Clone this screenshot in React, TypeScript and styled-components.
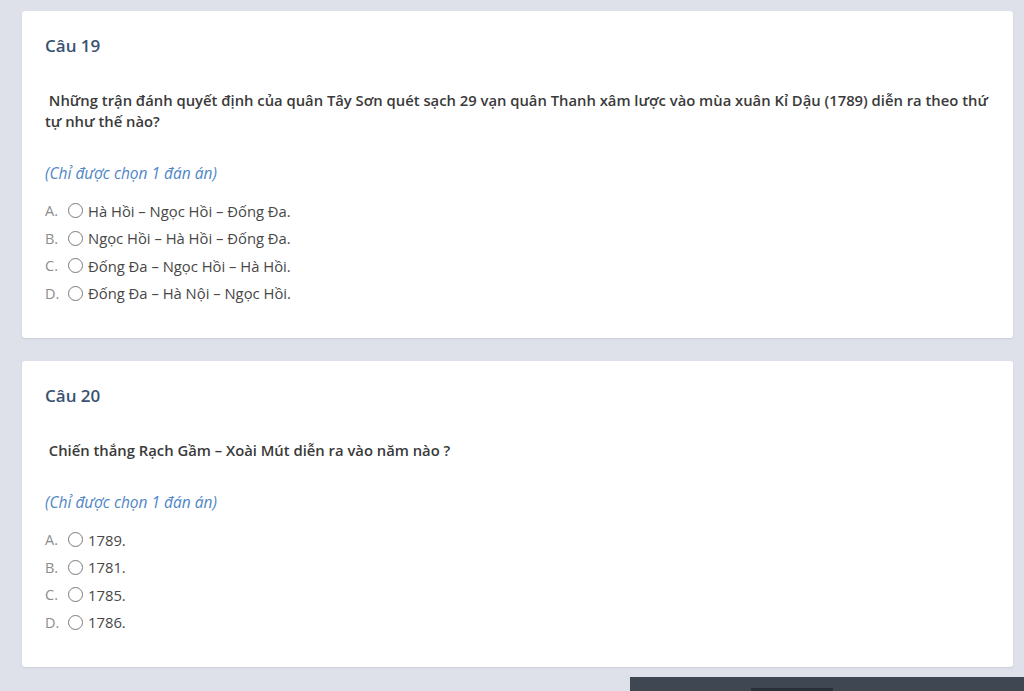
import React from "react";
import styled, { createGlobalStyle } from "styled-components";

const Global = createGlobalStyle`
  html, body { margin: 0; padding: 0; }
  body {
    background: #dfe1ea;
    font-family: "Open Sans", "Noto Sans", sans-serif;
    overflow: hidden;
  }
`;

const Page = styled.div`
  display: flex;
  flex-direction: column;
  gap: 23px;
  padding: 11px 11px 0 22px;
  height: 691px;
  box-sizing: border-box;
`;

const Card = styled.section`
  background: #ffffff;
  border-radius: 3px;
  box-shadow: 0 1px 2px rgba(60, 70, 100, 0.12);
  padding: 24px 16px 31px 23px;
  display: flex;
  flex-direction: column;
`;

const Title = styled.h2`
  margin: 0;
  font-size: 17px;
  line-height: 22px;
  font-weight: 600;
  color: #3a5271;
`;

const Question = styled.p`
  margin: 33px 0 0 0;
  font-size: 14.8px;
  line-height: 21px;
  font-weight: 600;
  color: #3a3a3a;
  white-space: pre-wrap;
`;

const Hint = styled.p`
  margin: 31px 0 0 0;
  font-size: 15.5px;
  line-height: 20px;
  font-style: italic;
  color: #4f86c6;
`;

const Options = styled.ul`
  list-style: none;
  margin: 14px 0 0 0;
  padding: 0;
  display: flex;
  flex-direction: column;
`;

const Option = styled.li`
  display: flex;
  align-items: center;
  height: 27.5px;
  font-size: 14.8px;
  color: #474747;
`;

const Letter = styled.span`
  width: 23px;
  color: #8c8c8c;
  font-size: 14.5px;
`;

const Radio = styled.span`
  width: 13px;
  height: 13px;
  border: 1px solid #7a7a7a;
  border-radius: 50%;
  margin-right: 5px;
  flex: none;
`;

const BottomBar = styled.div`
  position: fixed;
  right: 0;
  bottom: 0;
  width: 394px;
  height: 14px;
  background: #3f4852;
  display: flex;
  justify-content: flex-start;
  align-items: flex-end;
  padding-left: 121px;
  box-sizing: border-box;
`;

const BarTab = styled.div`
  width: 82px;
  height: 3px;
  background: #2a3038;
`;

type Q = { num: number; text: string; options: string[] };

const questions: Q[] = [
  {
    num: 19,
    text:
      " Những trận đánh quyết định của quân Tây Sơn quét sạch 29 vạn quân Thanh xâm lược vào mùa xuân Kỉ Dậu (1789) diễn ra theo thứ tự như thế nào?",
    options: [
      "Hà Hồi – Ngọc Hồi – Đống Đa.",
      "Ngọc Hồi – Hà Hồi – Đống Đa.",
      "Đống Đa – Ngọc Hồi – Hà Hồi.",
      "Đống Đa – Hà Nội – Ngọc Hồi.",
    ],
  },
  {
    num: 20,
    text: " Chiến thắng Rạch Gầm – Xoài Mút diễn ra vào năm nào ?",
    options: ["1789.", "1781.", "1785.", "1786."],
  },
];

const letters = ["A.", "B.", "C.", "D."];

export default function App() {
  return (
    <>
      <Global />
      <Page>
        {questions.map((q) => (
          <Card key={q.num}>
            <Title>Câu {q.num}</Title>
            <Question>{q.text}</Question>
            <Hint>(Chỉ được chọn 1 đán án)</Hint>
            <Options>
              {q.options.map((o, i) => (
                <Option key={i}>
                  <Letter>{letters[i]}</Letter>
                  <Radio />
                  <span>{o}</span>
                </Option>
              ))}
            </Options>
          </Card>
        ))}
      </Page>
      <BottomBar>
        <BarTab />
      </BottomBar>
    </>
  );
}
